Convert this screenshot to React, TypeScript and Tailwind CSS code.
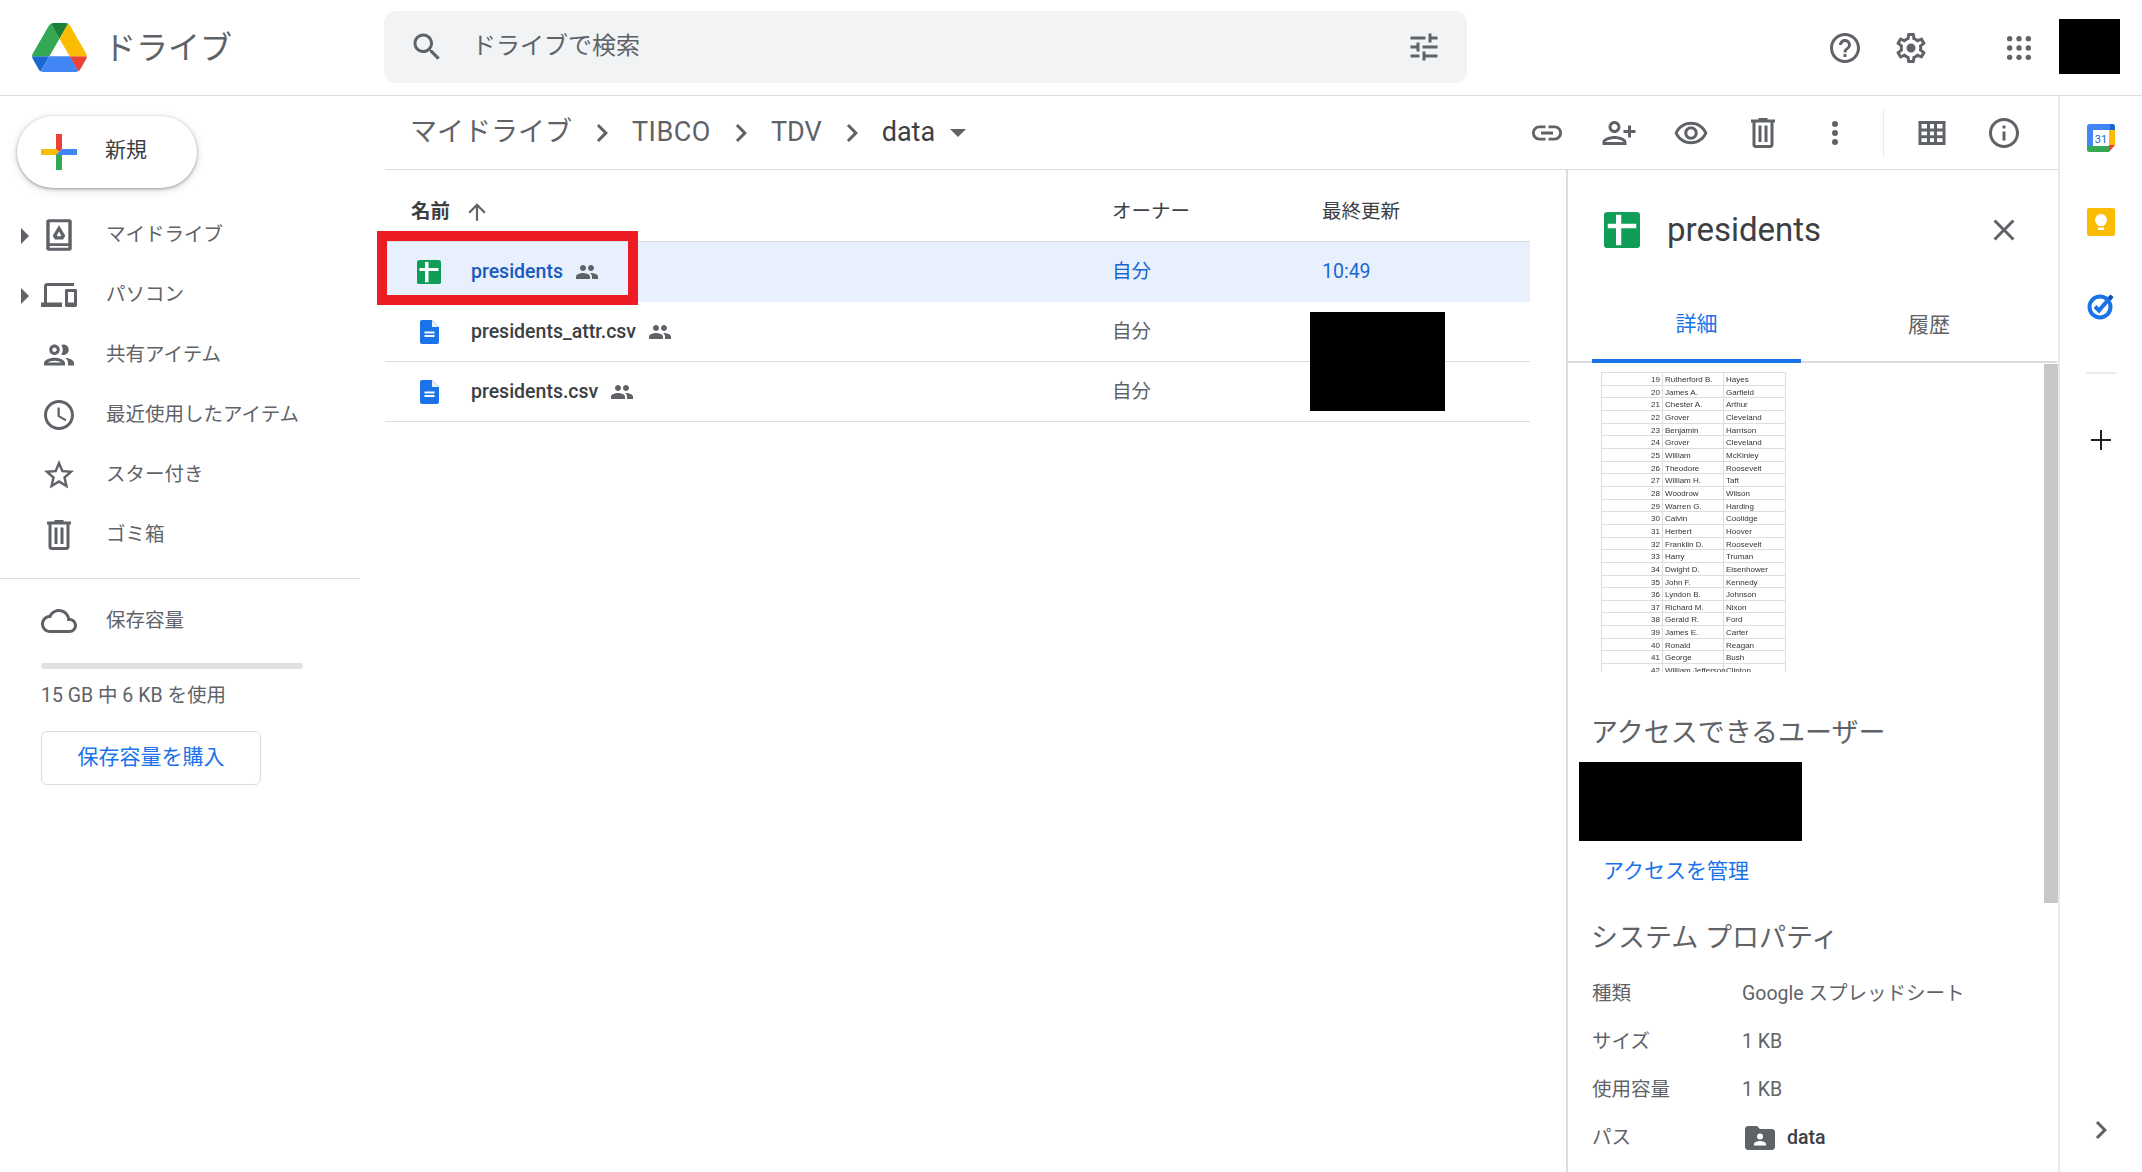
const ICON = {
  search: "M15.5 14h-.79l-.28-.27C15.41 12.59 16 11.11 16 9.5 16 5.91 13.09 3 9.5 3S3 5.91 3 9.5 5.91 16 9.5 16c1.61 0 3.09-.59 4.23-1.57l.27.28v.79l5 4.99L20.49 19l-4.99-5zm-6 0C7.01 14 5 11.99 5 9.5S7.01 5 9.5 5 14 7.01 14 9.5 11.99 14 9.5 14z",
  tune: "M3 17v2h6v-2H3zM3 5v2h10V5H3zm10 16v-2h8v-2h-8v-2h-2v6h2zM7 9v2H3v2h4v2h2V9H7zm14 4v-2H11v2h10zm-6-4h2V7h4V5h-4V3h-2v6z",
  help: "M11 18h2v-2h-2v2zm1-16C6.48 2 2 6.48 2 12s4.48 10 10 10 10-4.48 10-10S17.52 2 12 2zm0 18c-4.41 0-8-3.59-8-8s3.59-8 8-8 8 3.59 8 8-3.59 8-8 8zm0-14c-2.21 0-4 1.79-4 4h2c0-1.1.9-2 2-2s2 .9 2 2c0 2-3 1.75-3 5h2c0-2.25 3-2.5 3-5 0-2.21-1.79-4-4-4z",
  gear: "M19.43 12.98c.04-.32.07-.64.07-.98 0-.34-.03-.66-.07-.98l2.11-1.65c.19-.15.24-.42.12-.64l-2-3.46c-.09-.16-.26-.25-.44-.25-.06 0-.12.01-.17.03l-2.49 1c-.52-.4-1.08-.73-1.69-.98l-.38-2.65C14.46 2.18 14.25 2 14 2h-4c-.25 0-.46.18-.49.42l-.38 2.65c-.61.25-1.17.59-1.69.98l-2.49-1c-.06-.02-.12-.03-.18-.03-.17 0-.34.09-.43.25l-2 3.46c-.13.22-.07.49.12.64l2.11 1.65c-.04.32-.07.65-.07.98 0 .33.03.66.07.98l-2.11 1.65c-.19.15-.24.42-.12.64l2 3.46c.09.16.26.25.44.25.06 0 .12-.01.17-.03l2.49-1c.52.4 1.08.73 1.69.98l.38 2.65c.03.24.24.42.49.42h4c.25 0 .46-.18.49-.42l.38-2.65c.61-.25 1.17-.59 1.69-.98l2.49 1c.06.02.12.03.18.03.17 0 .34-.09.43-.25l2-3.46c.12-.22.07-.49-.12-.64l-2.11-1.65zm-1.98-1.71c.04.31.05.52.05.73 0 .21-.02.43-.05.73l-.14 1.13.89.7 1.08.84-.7 1.21-1.27-.51-1.04-.42-.9.68c-.43.32-.84.56-1.25.73l-1.06.43-.16 1.13-.2 1.35h-1.4l-.19-1.35-.16-1.13-1.06-.43c-.43-.18-.83-.41-1.23-.71l-.91-.7-1.06.43-1.27.51-.7-1.21 1.08-.84.89-.7-.14-1.13c-.03-.31-.05-.54-.05-.74s.02-.43.05-.73l.14-1.13-.89-.7-1.08-.84.7-1.21 1.27.51 1.04.42.9-.68c.43-.32.84-.56 1.25-.73l1.06-.43.16-1.13.2-1.35h1.39l.19 1.35.16 1.13 1.06.43c.43.18.83.41 1.23.71l.91.7 1.06-.43 1.27-.51.7 1.21-1.07.85-.89.7.14 1.13zM12 9a3 3 0 1 0 0 6 3 3 0 0 0 0-6z",
  link: "M3.9 12c0-1.71 1.39-3.1 3.1-3.1h4V7H7c-2.76 0-5 2.24-5 5s2.24 5 5 5h4v-1.9H7c-1.71 0-3.1-1.39-3.1-3.1zM8 13h8v-2H8v2zm9-6h-4v1.9h4c1.71 0 3.1 1.39 3.1 3.1s-1.39 3.1-3.1 3.1h-4V17h4c2.76 0 5-2.24 5-5s-2.24-5-5-5z",
  personAdd: "M9 12c2.21 0 4-1.79 4-4s-1.79-4-4-4-4 1.79-4 4 1.79 4 4 4zm0-6c1.1 0 2 .9 2 2s-.9 2-2 2-2-.9-2-2 .9-2 2-2zm0 8c-2.67 0-8 1.34-8 4v2h16v-2c0-2.66-5.33-4-8-4zm-6 4c.22-.72 3.31-2 6-2 2.7 0 5.8 1.29 6 2H3zm17-3v-3h3v-2h-3V7h-2v3h-3v2h3v3h2z",
  eye: "M12 6.5c3.79 0 7.17 2.13 8.82 5.5-1.65 3.37-5.02 5.5-8.82 5.5S4.83 15.37 3.18 12C4.83 8.63 8.21 6.5 12 6.5m0-2C7 4.5 2.73 7.61 1 12c1.73 4.39 6 7.5 11 7.5s9.27-3.11 11-7.5c-1.73-4.39-6-7.5-11-7.5zm0 5c1.38 0 2.5 1.12 2.5 2.5s-1.12 2.5-2.5 2.5-2.5-1.12-2.5-2.5 1.12-2.5 2.5-2.5m0-2c-2.48 0-4.5 2.02-4.5 4.5s2.02 4.5 4.5 4.5 4.5-2.02 4.5-4.5-2.02-4.5-4.5-4.5z",
  trash: "M15 3V2H9v1H4v2h1v15c0 1.1.9 2 2 2h10c1.1 0 2-.9 2-2V5h1V3h-5zm2 17H7V5h10v15zM9 7h2v11H9zm4 0h2v11h-2z",
  more: "M12 8a2 2 0 1 0 0-4 2 2 0 0 0 0 4zm0 2a2 2 0 1 0 0 4 2 2 0 0 0 0-4zm0 6a2 2 0 1 0 0 4 2 2 0 0 0 0-4z",
  grid: "M3 4v16h18V4H3zm2 2h3.67v3H5V6zm5.67 0h2.66v3h-2.66V6zm4.66 0H19v3h-3.67V6zM5 11h3.67v2.5H5V11zm5.67 0h2.66v2.5h-2.66V11zm4.66 0H19v2.5h-3.67V11zM5 15.5h3.67V18H5v-2.5zm5.67 0h2.66V18h-2.66v-2.5zm4.66 0H19V18h-3.67v-2.5z",
  info: "M11 7h2v2h-2zm0 4h2v6h-2zm1-9C6.48 2 2 6.48 2 12s4.48 10 10 10 10-4.48 10-10S17.52 2 12 2zm0 18c-4.41 0-8-3.59-8-8s3.59-8 8-8 8 3.59 8 8-3.59 8-8 8z",
  close: "M19 6.41L17.59 5 12 10.59 6.41 5 5 6.41 10.59 12 5 17.59 6.41 19 12 13.41 17.59 19 19 17.59 13.41 12z",
  chevron: "M10 6L8.59 7.41 13.17 12l-4.58 4.59L10 18l6-6z",
  up: "M4 12l1.41 1.41L11 7.83V20h2V7.83l5.58 5.59L20 12l-8-8-8 8z",
  people: "M16 11c1.66 0 2.99-1.34 2.99-3S17.66 5 16 5c-1.66 0-3 1.34-3 3s1.34 3 3 3zm-8 0c1.66 0 2.99-1.34 2.99-3S9.66 5 8 5C6.34 5 5 6.34 5 8s1.34 3 3 3zm0 2c-2.33 0-7 1.17-7 3.5V19h14v-2.5c0-2.33-4.67-3.5-7-3.5zm8 0c-.29 0-.62.02-.97.05 1.16.84 1.97 1.97 1.97 3.45V19h6v-2.5c0-2.33-4.67-3.5-7-3.5z",
  shared: "M9 13.75c-2.34 0-7 1.17-7 3.5V19h14v-1.75c0-2.33-4.66-3.5-7-3.5zM4.34 17c.84-.58 2.87-1.25 4.66-1.25s3.82.67 4.66 1.25H4.34zM9 12c1.93 0 3.5-1.57 3.5-3.5S10.93 5 9 5 5.5 6.57 5.5 8.5 7.07 12 9 12zm0-5c.83 0 1.5.67 1.5 1.5S9.83 10 9 10s-1.5-.67-1.5-1.5S8.17 7 9 7zm7.04 6.81c1.16.84 1.96 1.96 1.96 3.44V19h4v-1.75c0-2.02-3.5-3.17-5.96-3.44zM15 12c1.93 0 3.5-1.57 3.5-3.5S16.93 5 15 5c-.54 0-1.04.13-1.5.35.63.89 1 1.98 1 3.15s-.37 2.26-1 3.15c.46.22.96.35 1.5.35z",
  clock: "M11.99 2C6.47 2 2 6.48 2 12s4.47 10 9.99 10C17.52 22 22 17.52 22 12S17.52 2 11.99 2zM12 20c-4.42 0-8-3.58-8-8s3.58-8 8-8 8 3.58 8 8-3.58 8-8 8zm.5-13H11v6l5.25 3.15.75-1.23-4.5-2.67z",
  star: "M22 9.24l-7.19-.62L12 2 9.19 8.63 2 9.24l5.46 4.73L5.82 21 12 17.27 18.18 21l-1.63-7.03L22 9.24zM12 15.4l-3.76 2.27 1-4.28-3.32-2.88 4.38-.38L12 6.1l1.71 4.04 4.38.38-3.32 2.88 1 4.28L12 15.4z",
  cloud: "M19.35 10.04C18.67 6.59 15.64 4 12 4 9.11 4 6.6 5.64 5.35 8.04 2.34 8.36 0 10.91 0 14c0 3.31 2.69 6 6 6h13c2.76 0 5-2.24 5-5 0-2.64-2.05-4.78-4.65-4.96zM19 18H6c-2.21 0-4-1.79-4-4s1.79-4 4-4h.71C7.37 7.69 9.48 6 12 6c3.04 0 5.5 2.46 5.5 5.5v.5H19c1.66 0 3 1.34 3 3s-1.34 3-3 3z",
  devices: "M4 6h18V4H4c-1.1 0-2 .9-2 2v11H0v3h14v-3H4V6zm19 2h-6c-.55 0-1 .45-1 1v10c0 .55.45 1 1 1h6c.55 0 1-.45 1-1V9c0-.55-.45-1-1-1zm-1 9h-4v-7h4v7z",
  myDrive: "M5 1.500h14c.83 0 1.500.67 1.500 1.500v18c0 .83-.67 1.500-1.500 1.500H5c-.83 0-1.500-.67-1.500-1.500V3c0-.83.67-1.500 1.500-1.500zm.800 2V17.500h12.400V3.500H5.800zm0 15.800v1.200h12.400v-1.200H5.800zM12 5.500l4.200 7-1.500 2.500H9.300l-1.500-2.500 4.200-7zm0 4.200l-1.400 2.500.4.700h2l.4-.7-1.400-2.500z",
  folderUser: "M20 6h-8l-2-2H4c-1.1 0-2 .9-2 2v12c0 1.100.9 2 2 2h16c1.100 0 2-.9 2-2V8c0-1.100-.9-2-2-2zm-8 3a2 2 0 1 1 0 4 2 2 0 0 1 0-4zm4 8H8v-1c0-1.330 2.670-2 4-2s4 .67 4 2v1z",
};

function Icon({ d, className = "w-9 h-9 text-[#5f6368]" }: { d: string; className?: string }) {
  return (
    <svg viewBox="0 0 24 24" fill="currentColor" className={`shrink-0 ${className}`}>
      <path d={d} fillRule="evenodd" />
    </svg>
  );
}

function DriveLogo() {
  return (
    <svg viewBox="0 0 87.3 78" className="w-[55px] h-[49px] shrink-0">
      <path d="m6.6 66.85 3.85 6.65c.8 1.4 1.95 2.5 3.3 3.3l13.75-23.8h-27.500c0 1.550.4 3.100 1.200 4.500z" fill="#1967d2" />
      <path d="m43.65 25-13.75-23.8c-1.350.8-2.500 1.900-3.300 3.300l-25.400 44a9.060 9.060 0 0 0 -1.200 4.500h27.500z" fill="#34a853" />
      <path d="m73.55 76.8c1.350-.8 2.500-1.900 3.300-3.300l1.600-2.750 7.650-13.250c.8-1.400 1.200-2.950 1.200-4.500h-27.502l5.852 11.500z" fill="#ea4335" />
      <path d="m43.65 25 13.750-23.800c-1.350-.8-2.900-1.200-4.500-1.200h-18.500c-1.600 0-3.150.45-4.500 1.200z" fill="#188038" />
      <path d="m59.8 53h-32.300l-13.750 23.800c1.350.8 2.900 1.200 4.500 1.200h50.800c1.600 0 3.150-.45 4.500-1.200z" fill="#4285f4" />
      <path d="m73.4 26.500-12.700-22c-.8-1.400-1.950-2.500-3.300-3.300l-13.750 23.800 16.150 28h27.450c0-1.550-.4-3.100-1.200-4.500z" fill="#fbbc04" />
    </svg>
  );
}

function NewPlus() {
  return (
    <svg viewBox="0 0 36 36" className="w-9 h-9 shrink-0">
      <path d="M15 0h6v15l-3 3-3-3z" fill="#ea4335" />
      <path d="M0 15h15l3 3-3 3H0z" fill="#fbbc04" />
      <path d="M15 21l3-3 3 3v15h-6z" fill="#34a853" />
      <path d="M21 15h15v6H15z" fill="#4285f4" />
    </svg>
  );
}

function SheetIcon({ className }: { className: string }) {
  return (
    <svg viewBox="0 0 24 32" className={`shrink-0 ${className}`} preserveAspectRatio="none">
      <rect width="24" height="32" rx="2.500" fill="#0f9d58" />
      <path d="M8 2.500h3.500v8h10v4h-10v15H8v-15H2.500v-4H8z" fill="#fff" />
    </svg>
  );
}

function DocIcon() {
  return (
    <svg viewBox="0 0 19 24" className="w-[19px] h-6">
      <path d="M2 0h10l7 7v15a2 2 0 0 1-2 2H2a2 2 0 0 1-2-2V2a2 2 0 0 1 2-2z" fill="#1a73e8" />
      <path d="M12 0l7 7h-7z" fill="#e8f0fe" />
      <path d="M4.500 11.500h10v2h-10zM4.500 15h10v2h-10z" fill="#fff" />
    </svg>
  );
}

function CalendarIcon() {
  return (
    <svg viewBox="0 0 28 28" className="w-7 h-7">
      <path d="M0 2.500A2.500 2.500 0 0 1 2.500 0H23v6H6v16H0z" fill="#4285f4" />
      <path d="M23 0h2.500A2.500 2.500 0 0 1 28 2.500V6h-5z" fill="#1967d2" />
      <path d="M22 6h6v15h-6z" fill="#fbbc04" />
      <path d="M0 22h22v6H2.500A2.500 2.500 0 0 1 0 25.500z" fill="#34a853" />
      <path d="M22 28v-7h6z" fill="#ea4335" />
      <rect x="6" y="6" width="16" height="16" fill="#fff" />
      <text x="14" y="19" fontSize="11" textAnchor="middle" fill="#1967d2" className="[font-family:Roboto,sans-serif]">31</text>
    </svg>
  );
}

function KeepIcon() {
  return (
    <svg viewBox="0 0 28 28" className="w-7 h-7">
      <rect width="28" height="28" rx="2" fill="#fbbc04" />
      <circle cx="14" cy="12" r="6" fill="#fff" />
      <path d="M11 15h6v3h-6z" fill="#fff" />
      <rect x="11" y="19.500" width="6" height="2.500" fill="#fff" />
    </svg>
  );
}

function TasksIcon() {
  return (
    <svg viewBox="0 0 28 28" className="w-7 h-7">
      <circle cx="13" cy="15" r="10.500" fill="none" stroke="#1a73e8" strokeWidth="4" />
      <path d="M8 14.500l4 4L24 4.500" fill="none" stroke="#1a73e8" strokeWidth="4" />
      <path d="M21 6l2.500-3.500L26.500 5 24 8.500z" fill="#174ea6" />
    </svg>
  );
}

const NAV = [
  { label: "マイドライブ", d: ICON.myDrive, arrow: true },
  { label: "パソコン", d: ICON.devices, arrow: true },
  { label: "共有アイテム", d: ICON.shared, arrow: false },
  { label: "最近使用したアイテム", d: ICON.clock, arrow: false },
  { label: "スター付き", d: ICON.star, arrow: false },
  { label: "ゴミ箱", d: ICON.trash, arrow: false },
];

const FILES = [
  { name: "presidents", selected: true, owner: "自分", time: "10:49" },
  { name: "presidents_attr.csv", selected: false, owner: "自分", time: "" },
  { name: "presidents.csv", selected: false, owner: "自分", time: "" },
];

const SHEET_ROWS = [
  ["19", "Rutherford B.", "Hayes"],
  ["20", "James A.", "Garfield"],
  ["21", "Chester A.", "Arthur"],
  ["22", "Grover", "Cleveland"],
  ["23", "Benjamin", "Harrison"],
  ["24", "Grover", "Cleveland"],
  ["25", "William", "McKinley"],
  ["26", "Theodore", "Roosevelt"],
  ["27", "William H.", "Taft"],
  ["28", "Woodrow", "Wilson"],
  ["29", "Warren G.", "Harding"],
  ["30", "Calvin", "Coolidge"],
  ["31", "Herbert", "Hoover"],
  ["32", "Franklin D.", "Roosevelt"],
  ["33", "Harry", "Truman"],
  ["34", "Dwight D.", "Eisenhower"],
  ["35", "John F.", "Kennedy"],
  ["36", "Lyndon B.", "Johnson"],
  ["37", "Richard M.", "Nixon"],
  ["38", "Gerald R.", "Ford"],
  ["39", "James E.", "Carter"],
  ["40", "Ronald", "Reagan"],
  ["41", "George", "Bush"],
  ["42", "William Jefferson", "Clinton"],
];

const TOOLBAR = [ICON.link, ICON.personAdd, ICON.eye, ICON.trash, ICON.more];

function Header() {
  return (
    <header className="h-24 shrink-0 border-b border-[#dadce0] flex items-center">
      <div className="w-[384px] shrink-0 flex items-center pl-[32px] gap-[17px]">
        <DriveLogo />
        <span className="text-[32px] leading-none text-[#5f6368]">ドライブ</span>
      </div>
      <div className="w-[1083px] h-[72px] mt-[-1px] rounded-xl bg-[#f1f3f4] flex items-center pl-[25px] pr-[25px]">
        <Icon d={ICON.search} />
        <span className="ml-[27px] mb-[2px] flex-1 text-2xl text-[#5f6368]">ドライブで検索</span>
        <Icon d={ICON.tune} />
      </div>
      <div className="flex items-center ml-[360px]">
        <Icon d={ICON.help} />
      </div>
      <div className="flex items-center ml-[30px]">
        <Icon d={ICON.gear} />
      </div>
      <svg viewBox="0 0 24 24" fill="#5f6368" className="w-7 h-7 ml-[76px] shrink-0">
        {[4, 12, 20].map((y) =>
          [4, 12, 20].map((x) => <circle key={`${x}-${y}`} cx={x} cy={y} r="2.300" />),
        )}
      </svg>
      <div className="w-[61px] h-[55px] bg-black ml-[26px] mt-[-2px]" />
    </header>
  );
}

function Sidebar() {
  return (
    <aside className="w-[385px] shrink-0">
      <div className="w-[360px] border-b border-[#dadce0] pb-[13px]">
        <button className="mt-5 ml-[17px] w-[180px] h-[72px] rounded-full bg-white flex items-center pl-6 shadow-[0_1px_3px_rgba(60,64,67,0.45),0_2px_8px_rgba(60,64,67,0.2)]">
          <NewPlus />
          <span className="ml-7 mb-[2px] text-[21px] text-[#3c4043]">新規</span>
        </button>
        <nav className="mt-[17px]">
          {NAV.map((n) => (
            <div key={n.label} className="h-[60px] flex items-center relative pl-[41px]">
              {n.arrow && (
                <span className="absolute left-[21px] top-[23px] w-0 h-0 border-y-[8px] border-y-transparent border-l-[8px] border-l-[#5f6368]" />
              )}
              <Icon d={n.d} />
              <span className="ml-[29px] text-[19.5px] text-[#5f6368]">{n.label}</span>
            </div>
          ))}
        </nav>
      </div>
      <div className="pl-[41px]">
        <div className="mt-6 h-9 flex items-center">
          <Icon d={ICON.cloud} />
          <span className="ml-[29px] text-[19.5px] text-[#5f6368]">保存容量</span>
        </div>
        <div className="mt-[24px] w-[262px] h-1.5 rounded bg-[#e0e0e0]" />
        <div className="mt-[11px] h-8 flex items-center text-[19.5px] text-[#5f6368]">15 GB 中 6 KB を使用</div>
        <button className="mt-[19px] w-[220px] h-[54px] border border-[#dadce0] rounded-md text-[21px] text-[#1a73e8]">保存容量を購入</button>
      </div>
    </aside>
  );
}

function Crumb({ text }: { text: string }) {
  return (
    <>
      <span>{text}</span>
      <Icon d={ICON.chevron} className="w-9 h-9 mx-3 text-[#5f6368]" />
    </>
  );
}

function Toolbar() {
  return (
    <div className="h-[74px] shrink-0 border-b border-[#dadce0] flex items-center pl-[25px] text-[27px] text-[#5f6368]">
      <Crumb text="マイドライブ" />
      <span className="tracking-[0.5px]">TIBCO</span>
      <Icon d={ICON.chevron} className="w-9 h-9 mx-3 text-[#5f6368]" />
      <Crumb text="TDV" />
      <span className="text-[#3c4043]">data</span>
      <span className="ml-[15px] w-0 h-0 border-x-[8px] border-x-transparent border-t-[8px] border-t-[#5f6368]" />
      <div className="ml-auto flex items-center pr-[18px]">
        {TOOLBAR.map((d) => (
          <div key={d} className="w-[72px] flex justify-center">
            <Icon d={d} />
          </div>
        ))}
        <div className="w-px h-12 bg-[#e8eaed] ml-[12px] mr-[12px]" />
        <div className="w-[72px] flex justify-center">
          <Icon d={ICON.grid} />
        </div>
        <div className="w-[72px] flex justify-center">
          <Icon d={ICON.info} />
        </div>
      </div>
    </div>
  );
}

function FileList() {
  return (
    <div className="w-[1145px] relative">
      <div className="h-[72px] pt-[12px] flex items-center border-b border-[#dadce0] text-[19.5px] text-[#3c4043]">
        <div className="w-[727px] pl-[26px] flex items-center">
          <span className="font-bold text-[#3c4043]">名前</span>
          <Icon d={ICON.up} className="w-[26px] h-[26px] ml-[14px] text-[#5f6368]" />
        </div>
        <div className="w-[210px]">オーナー</div>
        <div>最終更新</div>
      </div>
      {FILES.map((f) => (
        <div
          key={f.name}
          className={`h-[60px] flex items-center text-[19.5px] ${
            f.selected ? "bg-[#e8f0fe] text-[#1967d2]" : "border-b border-[#dadce0] text-[#5f6368]"
          }`}
        >
          <div className="w-[727px] pl-[32px] flex items-center">
            <div className="w-[54px]">
              {f.selected ? (
                <SheetIcon className="w-6 h-6" />
              ) : (
                <div className="w-6 flex justify-center">
                  <DocIcon />
                </div>
              )}
            </div>
            <span className={`font-medium ${f.selected ? "text-[#185abc]" : "text-[#3c4043]"}`}>{f.name}</span>
            <Icon d={ICON.people} className="w-6 h-6 ml-3 text-[#5f6368]" />
          </div>
          <div className="w-[210px]">{f.owner}</div>
          <div>{f.time}</div>
        </div>
      ))}
      {/* annotation box and redaction drawn over the rows */}
      <div className="absolute left-[-8px] top-[61px] w-[261px] h-[74px] border-[10px] border-[#ed1c24]" />
      <div className="absolute left-[925px] top-[142px] w-[135px] h-[99px] bg-black" />
    </div>
  );
}

function SheetThumb() {
  return (
    <div className="ml-[33px] mt-[9px] w-[185px] h-[300px] overflow-hidden border-t border-x border-[#dddddd] blur-[0.35px] [font-family:'Liberation_Sans',sans-serif] text-[8px] text-[#333333]">
      {SHEET_ROWS.map((r) => (
        <div key={r[0]} className="h-[12.67px] grid grid-cols-[61px_61px_61px] border-b border-[#dddddd] leading-[13px]">
          <div className="text-right pr-[2px] border-r border-[#dddddd]">{r[0]}</div>
          <div className="pl-[2px] border-r border-[#dddddd] whitespace-nowrap">{r[1]}</div>
          <div className="pl-[2px]">{r[2]}</div>
        </div>
      ))}
    </div>
  );
}

function DetailPanel() {
  const props = [
    ["種類", "Google スプレッドシート"],
    ["サイズ", "1 KB"],
    ["使用容量", "1 KB"],
  ];
  return (
    <div className="ml-[36px] w-[491px] border-l-2 border-[#dadce0] relative">
      <div className="h-[120px] flex items-center pl-[36px]">
        <SheetIcon className="w-9 h-9" />
        <span className="ml-[27px] text-[33px] text-[#3c4043]">presidents</span>
        <Icon d={ICON.close} className="w-9 h-9 ml-auto mr-[35px] text-[#5f6368]" />
      </div>
      <div className="h-[73px] flex border-b-2 border-[#dadce0] pl-[24px] text-[21px]">
        <div className="w-[209px] border-b-4 border-[#1a73e8] mb-[-2px] flex items-center justify-center text-[#1a73e8]">詳細</div>
        <div className="w-[256px] flex items-center justify-center text-[#5f6368]">履歴</div>
      </div>
      <SheetThumb />
      <h3 className="mt-[41px] ml-[23px] h-10 flex items-center text-[27px] font-normal text-[#5f6368] whitespace-nowrap">アクセスできるユーザー</h3>
      <div className="mt-[9px] ml-[11px] w-[223px] h-[79px] bg-black" />
      <div className="mt-[11px] ml-[35px] h-10 flex items-center text-[21px] text-[#1a73e8]">アクセスを管理</div>
      <h3 className="mt-[26px] ml-[23px] h-10 flex items-center text-[27px] font-normal text-[#5f6368] whitespace-nowrap">システム プロパティ</h3>
      <div className="mt-[12px] pl-[24px] text-[19.5px] text-[#5f6368]">
        {props.map(([k, v]) => (
          <div key={k} className="h-12 flex items-center">
            <span className="w-[150px]">{k}</span>
            <span>{v}</span>
          </div>
        ))}
        <div className="h-12 flex items-center">
          <span className="w-[150px]">パス</span>
          <Icon d={ICON.folderUser} className="w-9 h-9 text-[#5f6368]" />
          <span className="ml-[9px] font-medium text-[#3c4043]">data</span>
        </div>
      </div>
      {/* panel scrollbar */}
      <div className="absolute right-[-1px] top-[194px] w-[14px] h-[539px] bg-[#c8c8c8]" />
    </div>
  );
}

function RightStrip() {
  return (
    <aside className="w-[84px] shrink-0 border-l-2 border-[#e8eaed] flex flex-col items-center pt-[28px]">
      <div className="h-7 flex justify-center w-full"><CalendarIcon /></div>
      <div className="h-7 mt-[56px] flex justify-center w-full"><KeepIcon /></div>
      <div className="h-7 mt-[56px] flex justify-center w-full"><TasksIcon /></div>
      <div className="w-[30px] h-[2px] bg-[#e8eaed] mt-[52px]" />
      <svg viewBox="0 0 20 20" className="w-5 h-5 mt-[56px]" fill="#202124">
        <path d="M9 0h2v9h9v2h-9v9H9v-9H0V9h9z" />
      </svg>
      <Icon d={ICON.chevron} className="w-9 h-9 mt-[662px] text-[#5f6368]" />
    </aside>
  );
}

export default function App() {
  return (
    <div className="w-[2142px] h-[1172px] overflow-hidden bg-white flex flex-col [font-family:Roboto,'Noto_Sans_CJK_JP',sans-serif]">
      <Header />
      <div className="flex-1 flex min-h-0">
        <Sidebar />
        <main className="flex-1 min-w-0 flex flex-col">
          <Toolbar />
          <div className="flex flex-1 min-h-0">
            <FileList />
            <DetailPanel />
          </div>
        </main>
        <RightStrip />
      </div>
    </div>
  );
}
